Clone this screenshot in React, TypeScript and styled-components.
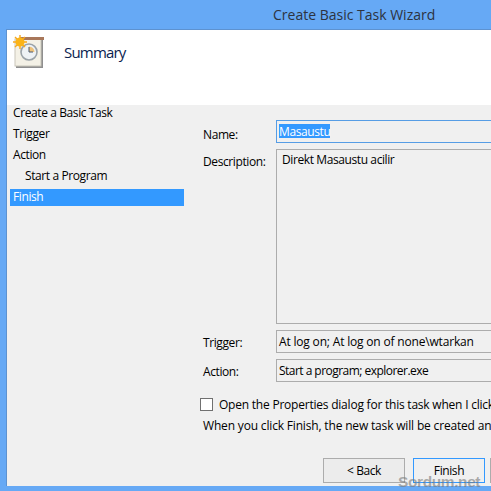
import React from 'react';
import styled, { createGlobalStyle } from 'styled-components';

const GlobalStyle = createGlobalStyle`
  html, body {
    margin: 0;
    padding: 0;
    background: #66a9f5;
  }
  * {
    box-sizing: border-box;
  }
`;

const WizardWindow = styled.div`
  width: 491px;
  height: 491px;
  overflow: hidden;
  position: relative;
  background: #66a9f5;
  display: flex;
  flex-direction: column;
  font-family: 'Open Sans', 'Noto Sans', sans-serif;
  font-size: 12px;
  letter-spacing: -0.4px;
  color: #000;
`;

const TitleBar = styled.div`
  height: 29px;
  flex: none;
  padding: 5px 0 0 273px;
  font-size: 14px;
  line-height: 20px;
  letter-spacing: 0;
  color: #2d3340;
`;

const Client = styled.div`
  height: 457px;
  width: 600px;
  flex: none;
  margin-left: 6px;
  border-top: 1px solid #5d92d0;
  border-left: 1px solid #5d92d0;
  display: flex;
  flex-direction: column;
`;

const Header = styled.div`
  height: 75px;
  flex: none;
  background: #fff;
  display: flex;
  align-items: flex-start;
  padding: 5px 0 0 6px;
`;

const HeaderTitle = styled.div`
  margin: 6px 0 0 19px;
  font-size: 15px;
  line-height: 22px;
  letter-spacing: -0.8px;
  color: #0b2350;
`;

const Body = styled.div`
  flex: 1;
  background: #f0f0f0;
  display: flex;
`;

const Steps = styled.div`
  width: 174px;
  flex: none;
  margin-left: 3px;
  display: flex;
  flex-direction: column;
  gap: 4px;
`;

const Step = styled.div<{ $active?: boolean; $indent?: boolean }>`
  height: 17px;
  line-height: 16px;
  padding-left: ${p => (p.$indent ? '15px' : '3px')};
  color: ${p => (p.$active ? '#fff' : '#000')};
  background: ${p => (p.$active ? '#3399ff' : 'transparent')};
`;

const Details = styled.div`
  flex: 1;
  padding: 15px 0 0 19px;
  display: flex;
  flex-direction: column;
`;

const FieldRow = styled.div`
  display: flex;
  margin-bottom: 6px;
`;

const FieldLabel = styled.div<{ $top: number }>`
  width: 73px;
  flex: none;
  padding-top: ${p => p.$top}px;
  line-height: 17px;
`;

const Field = styled.div<{ $focused?: boolean; $height: number; $tracking?: number }>`
  width: 300px;
  height: ${p => p.$height}px;
  border: 1px solid ${p => (p.$focused ? '#569de5' : '#acacac')};
  padding: 2px 0 0 2px;
  line-height: 17px;
  letter-spacing: ${p => p.$tracking ?? -0.4}px;
  white-space: nowrap;
`;

const DescriptionText = styled.div`
  margin-top: -1px;
  padding-left: 3px;
`;

const Selected = styled.span`
  background: #3399ff;
  color: #fff;
  display: inline-block;
  height: 14px;
  line-height: 15px;
`;

const CheckRow = styled.div`
  display: flex;
  align-items: center;
  margin: 9px 0 0 -3px;
  height: 14px;
  letter-spacing: -0.22px;
  white-space: nowrap;
`;

const CheckBox = styled.div`
  width: 13px;
  height: 13px;
  flex: none;
  background: #fff;
  border: 1px solid #707070;
  margin-right: 6px;
`;

const Note = styled.div`
  margin-top: 6px;
  line-height: 17px;
  letter-spacing: -0.17px;
  white-space: nowrap;
`;

const Buttons = styled.div`
  display: flex;
  gap: 8px;
  margin: 24px 0 0 120px;
`;

const Button = styled.div<{ $primary?: boolean; $width: number }>`
  width: ${p => p.$width}px;
  height: 25px;
  flex: none;
  background: ${p => (p.$primary ? '#f0f0f0' : '#ececec')};
  border: 1px solid ${p => (p.$primary ? '#3399ff' : '#acacac')};
  display: flex;
  align-items: center;
  justify-content: center;
`;

const CancelButton = styled(Button)`
  margin-left: -3px;
`;

const Watermark = styled.div`
  position: absolute;
  left: 398px;
  top: 472px;
  font-family: 'Liberation Sans', sans-serif;
  font-weight: 700;
  font-size: 15.5px;
  line-height: 20px;
  color: rgba(120, 120, 120, 0.6);
`;

const TaskIcon = () => (
  <svg width="32" height="33" viewBox="0 0 32 33">
    <rect x="3" y="5" width="27" height="28" fill="#8f8f8f" />
    <rect x="2" y="4" width="26" height="27" fill="#f4f1e6" stroke="#c9c6ba" />
    <rect x="7" y="2" width="24" height="3" fill="#a8775a" />
    <circle cx="16" cy="17" r="8" fill="#eef2f5" stroke="#9aa2a8" strokeWidth="1.6" />
    <path d="M16 17V11.500A5.500 5.500 0 0 1 21.500 17Z" fill="#eec27a" />
    <path d="M16 12v5h4" fill="none" stroke="#4a5a70" strokeWidth="1" />
    <g stroke="#f7a81b" strokeWidth="1.4">
      <path d="M7 0V14M0 7H14M2 2L12 12M12 2L2 12" />
    </g>
    <circle cx="7" cy="7" r="4.500" fill="#fbb417" />
  </svg>
);

const App: React.FC = () => {
  return (
    <WizardWindow>
      <GlobalStyle />
      <TitleBar>Create Basic Task Wizard</TitleBar>
      <Client>
        <Header>
          <TaskIcon />
          <HeaderTitle>Summary</HeaderTitle>
        </Header>
        <Body>
          <Steps>
            <Step>Create a Basic Task</Step>
            <Step>Trigger</Step>
            <Step>Action</Step>
            <Step $indent>Start a Program</Step>
            <Step $active>Finish</Step>
          </Steps>
          <Details>
            <FieldRow>
              <FieldLabel $top={6}>Name:</FieldLabel>
              <Field $focused $height={23}><Selected>Masaustu</Selected></Field>
            </FieldRow>
            <FieldRow>
              <FieldLabel $top={4}>Description:</FieldLabel>
              <Field $height={175}><DescriptionText>Direkt Masaustu acilir</DescriptionText></Field>
            </FieldRow>
            <FieldRow>
              <FieldLabel $top={4}>Trigger:</FieldLabel>
              <Field $height={23} $tracking={-0.18}>At log on; At log on of none\wtarkan</Field>
            </FieldRow>
            <FieldRow>
              <FieldLabel $top={4}>Action:</FieldLabel>
              <Field $height={23} $tracking={-0.53}>Start a program; explorer.exe</Field>
            </FieldRow>
            <CheckRow>
              <CheckBox />
              Open the Properties dialog for this task when I click Finish
            </CheckRow>
            <Note>When you click Finish, the new task will be created and added to your Windows schedule.</Note>
            <Buttons>
              <Button $width={82}>&lt; Back</Button>
              <Button $primary $width={72}>Finish</Button>
              <CancelButton $width={82}>Cancel</CancelButton>
            </Buttons>
          </Details>
        </Body>
      </Client>
      <Watermark>Sordum.net</Watermark>
    </WizardWindow>
  );
};

export default App;
